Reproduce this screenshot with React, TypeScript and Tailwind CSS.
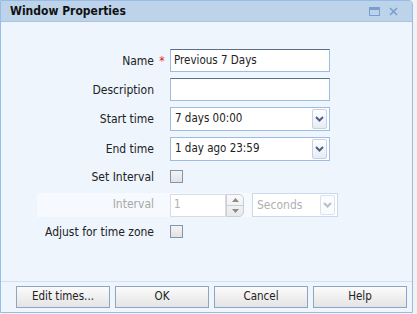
import React from 'react';

const font = "font-['DejaVu_Sans_Condensed','DejaVu_Sans',sans-serif]";

const Chevron = ({ color = '#4d6185' }: { color?: string }) => (
    <svg width="9" height="6" viewBox="0 0 9 6">
        <path d="M1 1 L4.5 4.5 L8 1" fill="none" stroke={color} strokeWidth="2" />
    </svg>
);

const Label = ({ children }: { children: React.ReactNode }) => (
    <div className="w-[153px] shrink-0 text-right text-[12px] text-[#222]">{children}</div>
);

const Checkbox = () => (
    <div className="w-[13px] h-[13px] border border-[#8096ad] bg-gradient-to-b from-[#f4f4f4] to-[#e2e2e2]" />
);

const Select = ({ value }: { value: string }) => (
    <div className="w-[160px] h-[24px] border border-[#9fbbdf] bg-white flex items-center justify-between pl-[4px] pr-[2px]">
        <span className="text-[11.5px] text-[#222]">{value}</span>
        <div className="w-[15px] h-[20px] border border-[#c3d2e6] rounded-[2px] bg-gradient-to-b from-white to-[#e7ecf4] flex items-center justify-center">
            <Chevron />
        </div>
    </div>
);

const Button = ({ children }: { children: React.ReactNode }) => (
    <div className="w-[94px] h-[22px] border border-[#8ea4bf] bg-gradient-to-b from-[#fbfbfb] to-[#e4e4e4] flex items-center justify-center text-[11.5px] text-[#222]">
        {children}
    </div>
);

export default function App() {
    return (
        <div className={`w-[417px] h-[314px] bg-[#f2f2f2] ${font}`}>
            <div className="w-[413px] h-[313px] border border-[#99bbe8] rounded-tr-[4px] bg-[#eef5fd] flex flex-col overflow-hidden">
                {/* title bar */}
                <div className="h-[21px] bg-[#bcd3ea] flex items-center pl-[9px] pr-[14px] border-b border-[#a9c3e1]">
                    <span className="text-[12px] font-bold text-[#111] flex-1">Window Properties</span>
                    <div className="w-[11px] h-[9px] border border-[#7a9ed0] border-t-[3px] mr-[9px]" />
                    <svg width="9" height="9" viewBox="0 0 9 9">
                        <path d="M1 1 L8 8 M8 1 L1 8" stroke="#7a9ed0" strokeWidth="1.6" />
                    </svg>
                </div>

                {/* form */}
                <div className="flex-1 flex flex-col pt-[27px]">
                    <div className="flex items-center h-[23px]">
                        <Label>Name</Label>
                        <span className="w-[16px] text-center text-[#e02020] text-[12px] leading-none">*</span>
                        <div className="w-[160px] h-[23px] border border-[#9fbbdf] border-t-[#5d6f86] bg-white flex items-center pl-[3px] text-[11.5px] text-[#222]">
                            Previous 7 Days
                        </div>
                    </div>
                    <div className="flex items-center h-[23px] mt-[6px]">
                        <Label>Description</Label>
                        <div className="w-[16px]" />
                        <div className="w-[160px] h-[23px] border border-[#9fbbdf] border-t-[#5d6f86] bg-white" />
                    </div>
                    <div className="flex items-center h-[24px] mt-[6px]">
                        <Label>Start time</Label>
                        <div className="w-[16px]" />
                        <Select value="7 days 00:00" />
                    </div>
                    <div className="flex items-center h-[24px] mt-[6px]">
                        <Label>End time</Label>
                        <div className="w-[16px]" />
                        <Select value="1 day ago 23:59" />
                    </div>
                    <div className="flex items-center h-[13px] mt-[9px]">
                        <Label>Set Interval</Label>
                        <div className="w-[16px]" />
                        <Checkbox />
                    </div>
                    <div className="flex items-center h-[24px] mt-[10px]">
                        <div className="flex items-center h-[24px] ml-[36px] pr-[8px] bg-[#f6f9fd]">
                            <div className="w-[117px] shrink-0 text-right text-[12px] text-[#a8a8a8] -mt-[2px]">Interval</div>
                            <div className="w-[16px]" />
                            <div className="w-[56px] h-[23px] border border-[#d6dde6] bg-white flex items-center pl-[3px] text-[11.5px] text-[#b0b0b0]">
                                1
                            </div>
                            <div className="w-[18px] h-[23px] border border-[#c9cfd6] rounded-r-[5px] bg-gradient-to-b from-[#fafafa] to-[#e9e9e9] flex flex-col">
                                <div className="flex-1 flex items-center justify-center border-b border-[#c9cfd6]">
                                    <svg width="7" height="4" viewBox="0 0 7 4"><path d="M0 4 L3.5 0 L7 4 Z" fill="#8a8a8a" /></svg>
                                </div>
                                <div className="flex-1 flex items-center justify-center">
                                    <svg width="7" height="4" viewBox="0 0 7 4"><path d="M0 0 L3.5 4 L7 0 Z" fill="#8a8a8a" /></svg>
                                </div>
                            </div>
                        </div>
                        <div className="w-[86px] h-[24px] border border-[#c9d9ee] bg-white flex items-center justify-between pl-[4px] pr-[2px]">
                            <span className="text-[12px] text-[#b0b0b0]">Seconds</span>
                            <div className="w-[15px] h-[20px] border border-[#d9e2ee] rounded-[2px] bg-[#fafbfc] flex items-center justify-center">
                                <Chevron color="#b4bfcf" />
                            </div>
                        </div>
                    </div>
                    <div className="flex items-center h-[13px] mt-[8px]">
                        <Label>Adjust for time zone</Label>
                        <div className="w-[16px]" />
                        <Checkbox />
                    </div>
                </div>

                {/* footer */}
                <div className="h-[31px] border-t border-[#d3e0ef] flex items-start pt-[4px] pl-[15px] gap-[5px]">
                    <Button>Edit times...</Button>
                    <Button>OK</Button>
                    <Button>Cancel</Button>
                    <Button>Help</Button>
                </div>
            </div>
        </div>
    );
}
